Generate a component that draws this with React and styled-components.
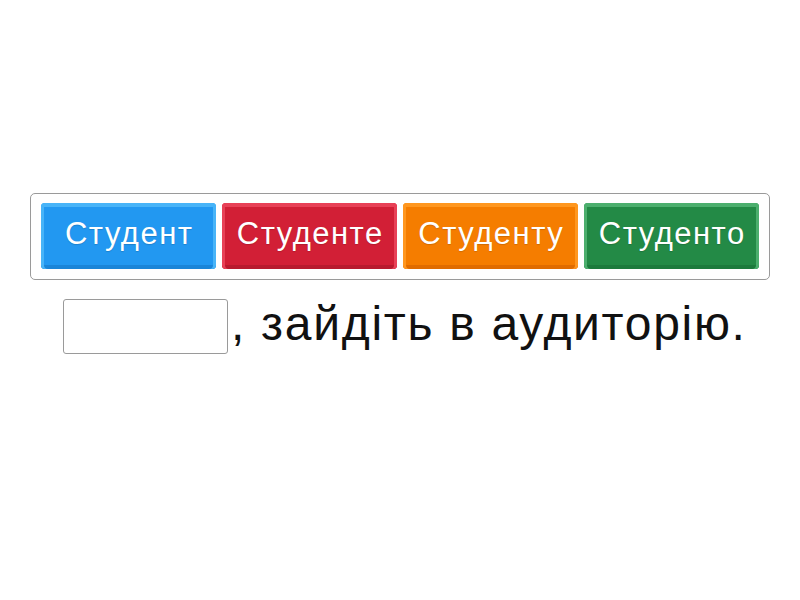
import React from "react";
import styled, { createGlobalStyle } from "styled-components";

const Global = createGlobalStyle`
  html, body { margin: 0; padding: 0; background: #fff; }
  body { width: 800px; height: 600px; font-family: "Liberation Sans", Arial, sans-serif; }
`;

const Page = styled.div`
  width: 800px;
  height: 600px;
  box-sizing: border-box;
  padding: 193px 30px 0;
  display: flex;
  flex-direction: column;
`;

const Bank = styled.div`
  box-sizing: border-box;
  width: 740px;
  height: 87px;
  border: 1px solid #9a9a9a;
  border-radius: 5px;
  padding: 9px 10px;
  display: flex;
  gap: 6px;
`;

const palette = {
  blue: { main: "#2298f1", light: "#48b4f8", dark: "#1a85d8" },
  red: { main: "#d21f36", light: "#e84157", dark: "#b81a2e" },
  orange: { main: "#f57d00", light: "#ff971f", dark: "#e06c00" },
  green: { main: "#238a46", light: "#4caf6e", dark: "#1c7a3c" },
};

const Tile = styled.button`
  box-sizing: border-box;
  width: 175px;
  height: 66px;
  border: none;
  border-radius: 4px;
  padding: 0 0 5px 1.5px;
  background: ${(p) => palette[p.$tone].main};
  box-shadow:
    inset 0 4px 0 ${(p) => palette[p.$tone].light},
    inset 3px 0 0 ${(p) => palette[p.$tone].light},
    inset -3px 0 0 ${(p) => palette[p.$tone].light},
    inset 0 -4px 0 ${(p) => palette[p.$tone].dark};
  color: #fff;
  font-family: "Liberation Sans", Arial, sans-serif;
  font-size: 31px;
  letter-spacing: 1.5px;
  line-height: 1;
  display: flex;
  align-items: center;
  justify-content: center;
  white-space: nowrap;
  text-shadow: 0 1px 1px rgba(0, 0, 0, 0.15);
`;

const Sentence = styled.div`
  display: flex;
  align-items: flex-start;
  margin: 19px 0 0 33px;
`;

const Blank = styled.div`
  box-sizing: border-box;
  width: 165px;
  height: 55px;
  border: 1px solid #9a9a9a;
  border-radius: 3px;
  background: #fff;
`;

const Words = styled.span`
  font-family: "Liberation Sans", Arial, sans-serif;
  font-size: 48px;
  letter-spacing: 1.7px;
  line-height: 54px;
  color: #111;
  margin-left: 3px;
  margin-top: -2px;
  white-space: nowrap;
`;

const words = [
  ["Студент", "blue"],
  ["Студенте", "red"],
  ["Студенту", "orange"],
  ["Студенто", "green"],
];

export default function App() {
  return (
    <>
      <Global />
      <Page>
        <Bank>
          {words.map(([w, t]) => (
            <Tile key={w} $tone={t}>{w}</Tile>
          ))}
        </Bank>
        <Sentence>
          <Blank />
          <Words>, зайдіть в аудиторію.</Words>
        </Sentence>
      </Page>
    </>
  );
}
